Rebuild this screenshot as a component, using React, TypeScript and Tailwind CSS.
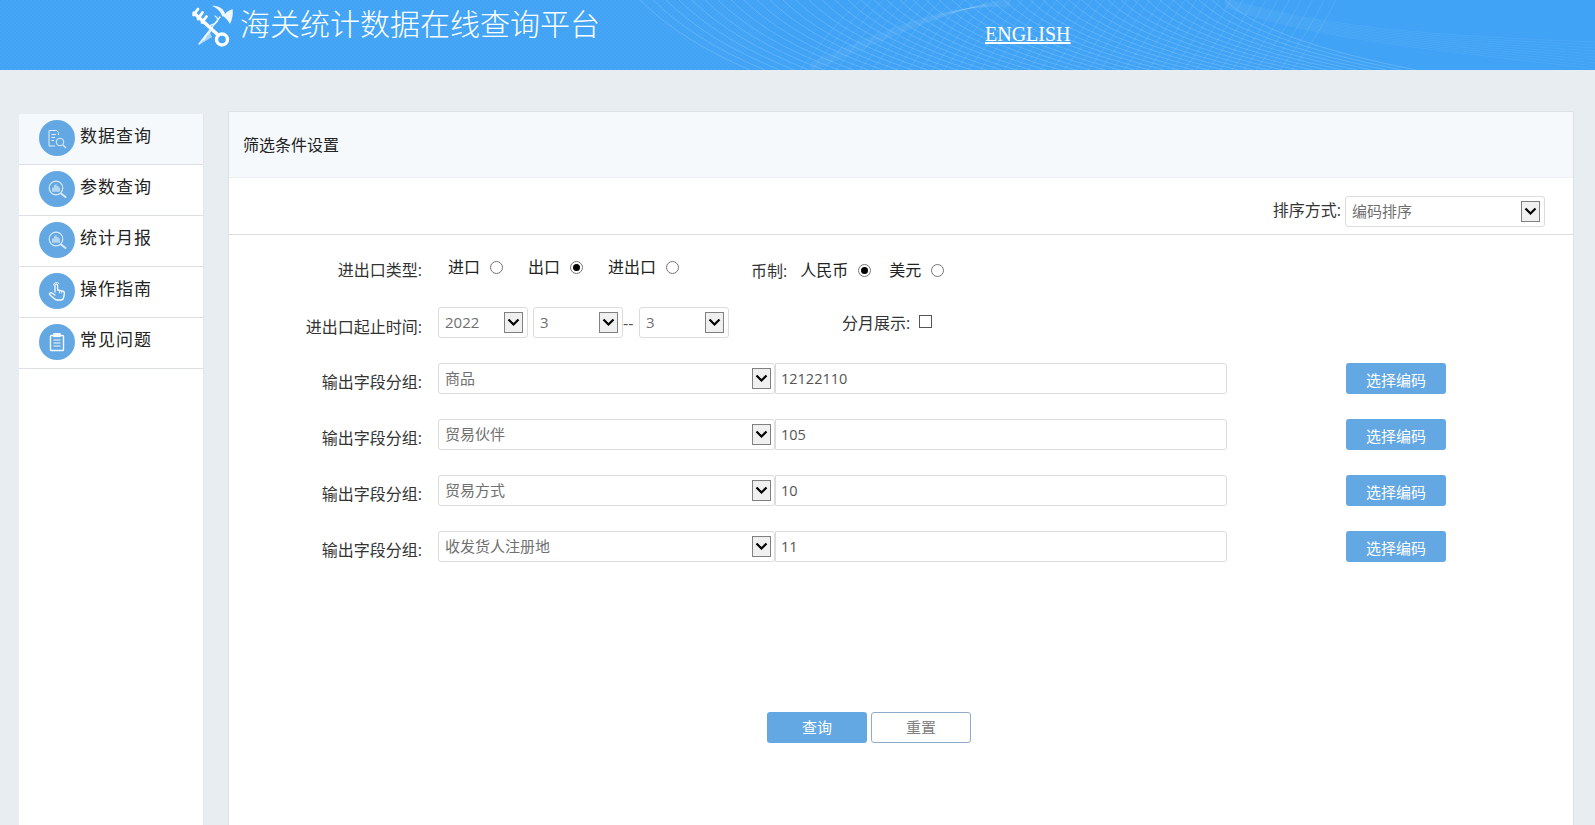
import React from "react";

function HeaderPattern() {
  const a: React.ReactNode[] = [];
  for (let i = 0; i < 46; i++) {
    const x = 640 + i * 13;
    a.push(<path key={"a" + i} d={`M${x} 0 Q${x + 40} 40 ${x + 110 + i * 1.8} 70`} stroke="#fff" strokeOpacity="0.16" fill="none" strokeWidth="1" />);
  }
  for (let i = 0; i < 42; i++) {
    const x = 800 + i * 12;
    a.push(<path key={"b" + i} d={`M${x} 70 Q${x + 30} 30 ${x + 60 - i * 0.4} 0`} stroke="#fff" strokeOpacity="0.1" fill="none" strokeWidth="1" />);
  }
  for (let i = 0; i < 10; i++) {
    a.push(<path key={"c" + i} d={`M1225 ${-2 + i} C1320 ${28 + i * 1.5} 1440 ${36 + i * 1.5} 1595 ${42 + i * 3}`} stroke="#fff" strokeOpacity="0.06" fill="none" />);
    a.push(<path key={"d" + i} d={`M810 ${72 - i} C880 ${42 - i} 940 ${12 - i} 1010 ${i - 2} `} stroke="#fff" strokeOpacity="0.05" fill="none" />);
  }
  for (let i = 0; i < 200; i++) {
    const x = i * 4 - 70;
    a.push(<path key={"e" + i} d={`M${x} 70 L${x + 70} 0`} stroke="#fff" strokeOpacity="0.045" fill="none" />);
    a.push(<path key={"f" + i} d={`M${x} 0 L${x + 70} 70`} stroke="#fff" strokeOpacity="0.03" fill="none" />);
  }
  return (
    <svg className="absolute inset-0 h-full w-full" viewBox="0 0 1595 70" preserveAspectRatio="none">
      {a}
    </svg>
  );
}

function Logo() {
  return (
    <svg width="54" height="55" viewBox="0 0 54 55" className="mt-[1px] shrink-0">
      <g stroke="#fff" fill="none" strokeLinecap="round">
        <path d="M9 12 L33 34" strokeWidth="3.400" />
        <path d="M8.500 14 L13 8 M13 18 L17.500 11.500 M17 21.500 L21.500 15.500" strokeWidth="2.800" />
        <circle cx="37" cy="38.500" r="5.500" strokeWidth="3.400" />
        <path d="M35 16 L14 43" strokeWidth="1.400" strokeOpacity="0.85" />
        <path d="M30 15 C36 19 31 23 26 24 C22 26 30 29 23 33 C19 35 22 37 18 39" strokeWidth="1.300" strokeOpacity="0.85" />
      </g>
      <path d="M27 5 C33 4 39 8 40 13 C42 10 46 9 47.500 8 C48.500 13 47 19 45 23 C43 19 40 16 37 15 C36 11 32 7 27 5 Z" fill="#fff" fillOpacity="0.92" />
      <path d="M24 30 L14 44 L27 36 Z" fill="#fff" fillOpacity="0.55" />
    </svg>
  );
}

function IconDoc() {
  return (
    <svg width="36" height="36" viewBox="0 0 36 36" fill="none" stroke="#fff" strokeWidth="1" className="opacity-80">
      <path d="M19.500 15 V12.500 L17.500 10.500 H10 V26 H16" />
      <path d="M12.500 14.500 H17 M12.500 17.500 H16 M12.500 20.500 H15" />
      <circle cx="21" cy="22" r="3.800" />
      <path d="M24 25 L27 28" strokeWidth="1.300" />
    </svg>
  );
}

function IconChart() {
  return (
    <svg width="36" height="36" viewBox="0 0 36 36" fill="none" stroke="#fff" className="opacity-75">
      <circle cx="17" cy="17" r="6.800" strokeWidth="1.200" />
      <path d="M22 22.500 L26.500 26" strokeWidth="2" strokeLinecap="round" />
      <path d="M13 20.800 V16.500 H15 V14.500 L17.500 12.800 V15 H19.500 V16.500 H21 V20.800 Z" fill="#fff" fillOpacity="0.7" stroke="none" />
    </svg>
  );
}

function IconHand() {
  return (
    <svg width="36" height="36" viewBox="0 0 36 36" fill="none" stroke="#fff" strokeWidth="1.300" strokeLinejoin="round" strokeLinecap="round" className="opacity-95">
      <path d="M14.500 12 A3.200 3.200 0 0 1 20 10.500" strokeWidth="0.900" />
      <path d="M16 19 V12.500 A1.300 1.300 0 0 1 18.600 12.500 V17 L24 18.200 C25.500 18.600 25.500 20 25.300 21 L24.500 25 C24.200 26.500 23 27 22 27 H18 C16.500 27 15.500 26 14.500 25 L10.500 21.500 C10 20.500 11.500 19.200 13 20 L16 22" />
      <path d="M20.500 17.500 V20 M22.800 18 V20" strokeWidth="0.900" />
    </svg>
  );
}

function IconClip() {
  return (
    <svg width="36" height="36" viewBox="0 0 36 36" fill="none" stroke="#fff" strokeWidth="1.400" className="opacity-95">
      <rect x="11.500" y="11.500" width="13" height="15" rx="0.800" />
      <rect x="15" y="9.800" width="6" height="2.600" fill="#fff" />
      <path d="M14.500 16 H21.500 M14.500 19 H21.500 M14.500 22 H21.500" strokeWidth="1.100" />
    </svg>
  );
}

const menu: { t: string; i: React.ReactNode }[] = [
  { t: "数据查询", i: <IconDoc /> },
  { t: "参数查询", i: <IconChart /> },
  { t: "统计月报", i: <IconChart /> },
  { t: "操作指南", i: <IconHand /> },
  { t: "常见问题", i: <IconClip /> },
];

function Select({ value, w, wide }: { value: string; w: string; wide?: boolean }) {
  return (
    <span className={`relative block h-[31px] shrink-0 ${w}`}>
      <select
        defaultValue={value}
        className="block h-full w-full appearance-none rounded-[3px] border border-[#dcdcdc] bg-white pl-[6px] text-[15px] text-[#707070] outline-none"
      >
        <option>{value}</option>
      </select>
      <span
        className={`pointer-events-none absolute top-[5px] flex h-[21px] w-[19px] items-center justify-center border border-[#808080] bg-[#f0f0f0] ${wide ? "right-[4px]" : "right-[5px]"}`}
      >
        <svg width="13" height="9" viewBox="0 0 13 9">
          <path d="M1.500 1.500 L6.500 6.500 L11.500 1.500" fill="none" stroke="#000" strokeWidth="2.200" />
        </svg>
      </span>
    </span>
  );
}

function Radio({ on }: { on?: boolean }) {
  return (
    <span className="flex h-[13px] w-[13px] shrink-0 items-center justify-center rounded-full border border-[#767676] bg-white">
      {on && <span className="h-[7px] w-[7px] rounded-full bg-black" />}
    </span>
  );
}

const rows = [
  ["商品", "12122110"],
  ["贸易伙伴", "105"],
  ["贸易方式", "10"],
  ["收发货人注册地", "11"],
];

export default function App() {
  return (
    <div className="h-[825px] overflow-hidden bg-[#e8edf2] font-['Open_Sans','Noto_Sans_CJK_SC',sans-serif]">
      <header className="relative flex h-[70px] items-start overflow-hidden bg-[#40a3f5] pl-[185px] text-white">
        <HeaderPattern />
        <div className="relative"><Logo /></div>
        <h1 className="relative ml-[1px] w-[360px] shrink-0 text-[30px] leading-[44px] font-light font-['Noto_Sans_CJK_SC',sans-serif]">
          海关统计数据在线查询平台
        </h1>
        <a className="relative mt-[22px] ml-[385px] text-[20px] leading-[24px] underline font-['Liberation_Serif',serif]">ENGLISH</a>
      </header>

      <div className="flex items-start pt-[41px] pl-[19px]">
        <aside className="mt-[3px] h-[711px] w-[185px] shrink-0 border-r border-[#e3e7ec] bg-white">
          {menu.map((m, i) => (
            <div
              key={m.t}
              className={`flex h-[51px] items-start border-b border-[#dcdfe3] pt-[6px] pl-[20px] ${i === 0 ? "bg-[#f5f9fc]" : ""}`}
            >
              <span className="flex h-[36px] w-[36px] shrink-0 items-center justify-center rounded-full bg-[#64a8e3]">{m.i}</span>
              <span className="ml-[5px] text-[17px] leading-[31px] tracking-[1px] text-[#222]">{m.t}</span>
            </div>
          ))}
        </aside>

        <main className="ml-[24px] h-[760px] w-[1346px] shrink-0 border border-[#dde2e7] bg-white">
          <div className="flex h-[66px] items-center border-b border-[#edf0f3] bg-[#f5f9fc] pl-[14px] text-[16px] text-[#222]">
            筛选条件设置
          </div>
          <div className="flex h-[57px] items-start justify-end border-b border-[#dcdcdc] pt-[18px] pr-[28px]">
            <span className="mr-[4px] text-[16px] leading-[28px] text-[#333]">排序方式:</span>
            <Select value="编码排序" w="w-[200px]" />
          </div>

          <div className="pt-[19px]">
            <div className="flex h-[32px] items-center text-[16px] text-[#222]">
              <div className="w-[193px] shrink-0 text-right text-[#333]">进出口类型:</div>
              <span className="mb-[6px] ml-[26px]">进口</span>
              <span className="mb-[6px] ml-[10px]"><Radio /></span>
              <span className="mb-[6px] ml-[25px]">出口</span>
              <span className="mb-[6px] ml-[10px]"><Radio on /></span>
              <span className="mb-[6px] ml-[25px]">进出口</span>
              <span className="mb-[6px] ml-[10px]"><Radio /></span>
              <span className="ml-[72px] shrink-0 whitespace-nowrap pt-[1px] text-[#333]">币制:</span>
              <span className="ml-[13px] shrink-0">人民币</span>
              <span className="ml-[10px]"><Radio on /></span>
              <span className="ml-[18px] shrink-0">美元</span>
              <span className="ml-[10px]"><Radio /></span>
            </div>

            <div className="mt-[21px] flex h-[31px] items-center text-[16px] text-[#333]">
              <div className="w-[193px] shrink-0 pt-[8px] text-right">进出口起止时间:</div>
              <span className="ml-[16px]"><Select value="2022" w="w-[90px]" /></span>
              <span className="ml-[5px]"><Select value="3" w="w-[90px]" /></span>
              <span className="w-[16px] text-left text-[#555]">--</span>
              <Select value="3" w="w-[90px]" />
              <span className="ml-[113px]">分月展示:</span>
              <span className="mb-[3px] ml-[9px] h-[13px] w-[13px] border border-[#555] bg-white" />
            </div>

            <div className="mt-[25px] flex flex-col gap-[25px]">
              {rows.map(([s, v]) => (
                <div key={s} className="flex h-[31px] items-center">
                  <div className="w-[193px] shrink-0 pt-[7px] text-right text-[16px] text-[#333]">输出字段分组:</div>
                  <span className="ml-[16px]"><Select value={s} w="w-[337px]" wide /></span>
                  <input
                    readOnly
                    value={v}
                    className="h-[31px] w-[452px] rounded-r-[3px] border border-[#dcdcdc] pl-[5px] text-[14.5px] text-[#555] outline-none"
                  />
                  <button className="ml-[119px] h-[31px] w-[100px] rounded-[3px] bg-[#64a8e3] pt-[3px] text-[15px] text-white">选择编码</button>
                </div>
              ))}
            </div>

            <div className="mt-[150px] flex pl-[538px]">
              <button className="h-[31px] w-[100px] rounded-[3px] bg-[#64a8e3] text-[15px] text-white">查询</button>
              <button className="ml-[4px] h-[31px] w-[100px] rounded-[3px] border border-[#8fabcb] bg-white text-[15px] text-[#808080]">重置</button>
            </div>
          </div>
        </main>
      </div>
    </div>
  );
}
